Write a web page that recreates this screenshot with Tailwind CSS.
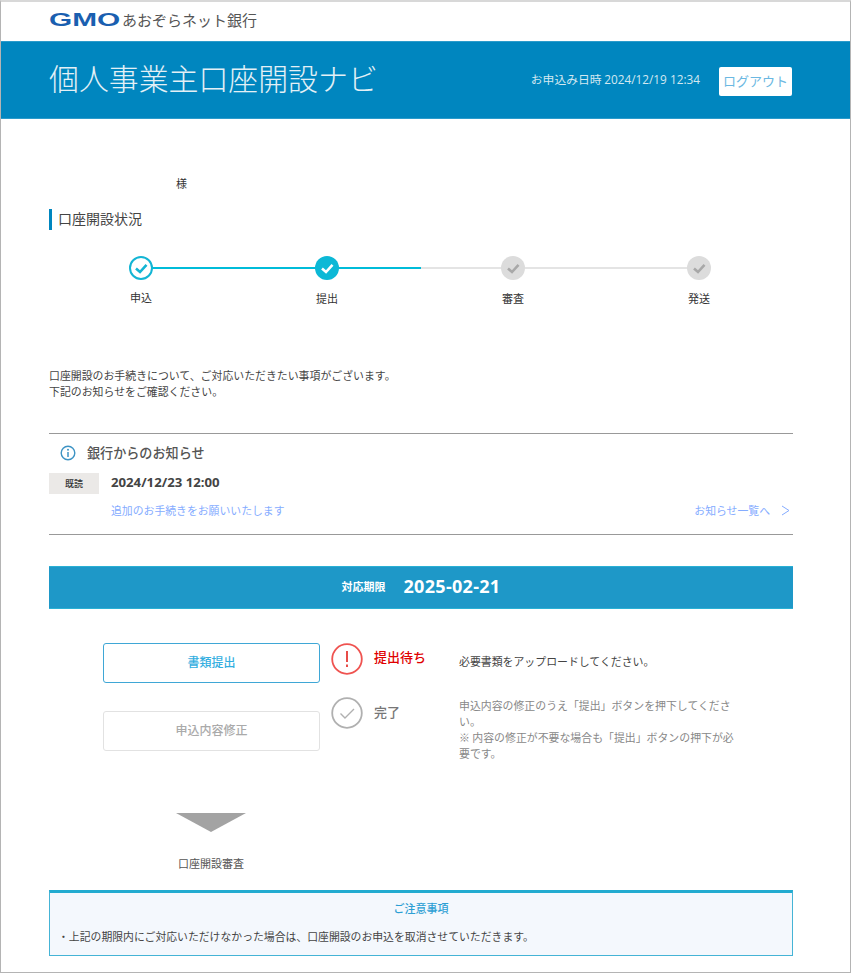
<!DOCTYPE html>
<html lang="ja">
  <head>
    <meta charset="UTF-8" />
    <script src="https://cdn.jsdelivr.net/npm/@tailwindcss/browser@4"></script>
    <title>個人事業主口座開設ナビ</title>
  </head>
  <body class="bg-white font-['Noto_Sans_CJK_JP','Liberation_Sans',sans-serif] text-[11px] text-[#333]">
    <div class="w-[851px] h-[973px] overflow-hidden border-t-2 border-t-[#d8d8d8] border-x border-x-[#b4b4b4] border-b border-b-[#b4b4b4]">
      <!-- logo -->
      <div class="h-[39px] pl-[48px] flex items-center gap-[2px] pb-[5px]">
        <span class="font-['Liberation_Sans'] font-bold text-[19px] leading-none text-[#1a5fb0] scale-x-[1.57] origin-left w-[71px]">GMO</span>
        <span class="text-[15px] leading-none text-[#555]">あおぞらネット銀行</span>
      </div>
      <!-- header -->
      <header class="h-[78px] bg-[#0086bf] border-y border-[#2b9bcb] pl-[48px] pr-[58px] flex items-center">
        <h1 class="text-[29.9px] leading-none font-light text-[#e3f0f6] pb-[5px]">個人事業主口座開設ナビ</h1>
        <div class="ml-auto text-[11.8px] text-[#d3e8f1] pb-[2px]">お申込み日時 <span class="font-['Open_Sans']">2024/12/19 12:34</span></div>
        <a class="ml-[19px] mt-[2px] w-[73px] h-[29px] rounded-[2px] bg-white text-[#6bb8e2] text-[13px] flex items-center justify-center">ログアウト</a>
      </header>

      <main class="pl-[48px] pr-[57px]">
        <p class="pt-[56px] pl-[127px] h-[90px] text-[11px] leading-[17px]">様</p>

        <h2 class="border-l-[3px] border-[#0086bf] pl-[6px] h-[21px] text-[14px] leading-[19px] text-[#444]">口座開設状況</h2>

        <!-- steps -->
        <div class="relative mt-[26px] ml-[80px] w-[582px] h-[46px] flex justify-between">
          <div class="absolute left-[12px] right-[12px] top-[11px] h-[2px] bg-[#e4e4e4]"></div>
          <div class="absolute left-[12px] w-[280px] top-[11px] h-[2px] bg-[#00bcd9]"></div>
          <div class="relative w-[24px] h-[24px] rounded-full bg-white border-2 border-[#13b5d4] flex items-center justify-center">
            <svg class="shrink-0" width="24" height="24" viewBox="0 0 24 24" fill="none"><path d="M7 12.5 L11 16 L17.5 8.8" stroke="#13b5d4" stroke-width="2.6" /></svg>
            <span class="absolute top-[31px] left-1/2 -translate-x-1/2 w-[40px] text-center text-[11px] leading-[16px]">申込</span>
          </div>
          <div class="relative w-[24px] h-[24px] rounded-full bg-[#0cb8d6] flex items-center justify-center">
            <svg class="shrink-0" width="24" height="24" viewBox="0 0 24 24" fill="none"><path d="M7 12.5 L11 16 L17.5 8.8" stroke="#fff" stroke-width="2.6" /></svg>
            <span class="absolute top-[34px] left-1/2 -translate-x-1/2 w-[40px] text-center text-[11px] leading-[16px]">提出</span>
          </div>
          <div class="relative w-[24px] h-[24px] rounded-full bg-[#dcdcdc] flex items-center justify-center">
            <svg class="shrink-0" width="24" height="24" viewBox="0 0 24 24" fill="none"><path d="M7 12.5 L11 16 L17.5 8.8" stroke="#a8a8a8" stroke-width="2.6" /></svg>
            <span class="absolute top-[34px] left-1/2 -translate-x-1/2 w-[40px] text-center text-[11px] leading-[16px]">審査</span>
          </div>
          <div class="relative w-[24px] h-[24px] rounded-full bg-[#dcdcdc] flex items-center justify-center">
            <svg class="shrink-0" width="24" height="24" viewBox="0 0 24 24" fill="none"><path d="M7 12.5 L11 16 L17.5 8.8" stroke="#a8a8a8" stroke-width="2.6" /></svg>
            <span class="absolute top-[34px] left-1/2 -translate-x-1/2 w-[40px] text-center text-[11px] leading-[16px]">発送</span>
          </div>
        </div>

        <p class="mt-[65px] text-[10.9px] leading-[16px] text-[#444]">口座開設のお手続きについて、ご対応いただきたい事項がございます。<br />下記のお知らせをご確認ください。</p>

        <!-- notices -->
        <section class="mt-[34px] h-[102px] border-y border-[#999] flex flex-col">
          <div class="flex items-center h-[33px] pl-[11px] pt-[5px]">
            <svg width="16" height="16" viewBox="0 0 16 16" fill="none"><circle cx="8" cy="8" r="6.8" stroke="#3d93c4" stroke-width="1.4" /><circle cx="8" cy="4.8" r="1" fill="#3d93c4" /><path d="M8 7v5" stroke="#3d93c4" stroke-width="1.5" /></svg>
            <span class="ml-[11px] text-[13.1px] font-medium text-[#555]">銀行からのお知らせ</span>
          </div>
          <div class="flex items-center h-[22px] mt-[5px]">
            <span class="w-[50px] h-[21px] bg-[#ebe9e7] text-[9px] font-medium text-center leading-[21px]">既読</span>
            <span class="ml-[12px] font-['Open_Sans'] font-bold text-[13.2px] text-[#444]">2024/12/23 12:00</span>
          </div>
          <div class="flex justify-between mt-[8px] pl-[62px] pr-[3px] text-[10.85px] leading-[16px] text-[#85acff]">
            <a>追加のお手続きをお願いいたします</a>
            <a class="flex items-center gap-[11px]">お知らせ一覧へ
              <svg width="9" height="11" viewBox="0 0 9 11" fill="none"><path d="M1 1l7 4.5-7 4.5" stroke="#85acff" stroke-width="1" /></svg>
            </a>
          </div>
        </section>

        <!-- deadline -->
        <div class="mt-[31px] h-[43px] bg-[#1e98c8] border-y border-[#2ab0d4] flex items-center justify-center gap-[18px] text-white pb-[2px]">
          <span class="text-[11px] font-bold">対応期限</span>
          <span class="font-['Open_Sans'] font-bold text-[18px] tracking-[0.3px]">2025-02-21</span>
        </div>

        <!-- actions -->
        <div class="mt-[34px] pl-[54px] flex flex-col gap-[28px]">
          <div class="flex items-center h-[40px]">
            <a class="w-[217px] h-[40px] border border-[#3fa7d6] rounded-[3px] text-[12px] text-[#33aee0] font-medium text-center leading-[35px]">書類提出</a>
            <svg class="ml-[11px] -mt-[8px]" width="32" height="32" viewBox="0 0 32 32" fill="none"><circle cx="16" cy="16" r="14.8" stroke="#ef5350" stroke-width="1.8" /><path d="M16 8v11" stroke="#e53935" stroke-width="1.8" /><path d="M16 21.5v2.5" stroke="#e53935" stroke-width="1.8" /></svg>
            <span class="ml-[11px] -mt-[12px] w-[85px] text-[13px] font-medium text-[#e00000]">提出待ち</span>
            <span class="-mt-[4px] text-[10.9px] text-[#444]">必要書類をアップロードしてください。</span>
          </div>
          <div class="flex items-start h-[40px]">
            <a class="w-[217px] h-[40px] border border-[#e2e2e2] rounded-[3px] text-[12px] text-[#aaa] font-medium text-center leading-[36px]">申込内容修正</a>
            <svg class="ml-[11px] -mt-[14px]" width="32" height="32" viewBox="0 0 32 32" fill="none"><circle cx="16" cy="16" r="14.8" stroke="#b0b0b0" stroke-width="1.8" /><path d="M9.5 16.5l4.5 4.5 9-9" stroke="#b0b0b0" stroke-width="1.4" /></svg>
            <span class="ml-[11px] -mt-[11px] w-[85px] text-[13px] font-medium text-[#777] leading-[24px]">完了</span>
            <span class="-mt-[14px] w-[285px] text-[10.9px] leading-[16px] text-[#888]">申込内容の修正のうえ「提出」ボタンを押下してください。<br />※ 内容の修正が不要な場合も「提出」ボタンの押下が必要です。</span>
          </div>
        </div>

        <!-- next -->
        <div class="mt-[62px] w-[324px] flex flex-col items-center">
          <div class="w-0 h-0 border-x-[35px] border-x-transparent border-t-[19px] border-t-[#a3a3a3]"></div>
          <p class="mt-[23px] text-[11px] leading-[16px] text-[#555]">口座開設審査</p>
        </div>

        <!-- caution -->
        <section class="mt-[19px] h-[66px] bg-[#f4f8fd] border border-[#45b4d6] border-t-[3px] border-t-[#22abd0] flex flex-col">
          <h3 class="text-center text-[11px] font-medium leading-[16px] mt-[7px] text-[#2c9fd4]">ご注意事項</h3>
          <p class="mt-[12px] pl-[8px] text-[10.85px] leading-[16px] text-[#444]">・上記の期限内にご対応いただけなかった場合は、口座開設のお申込を取消させていただきます。</p>
        </section>
      </main>
    </div>
  </body>
</html>
